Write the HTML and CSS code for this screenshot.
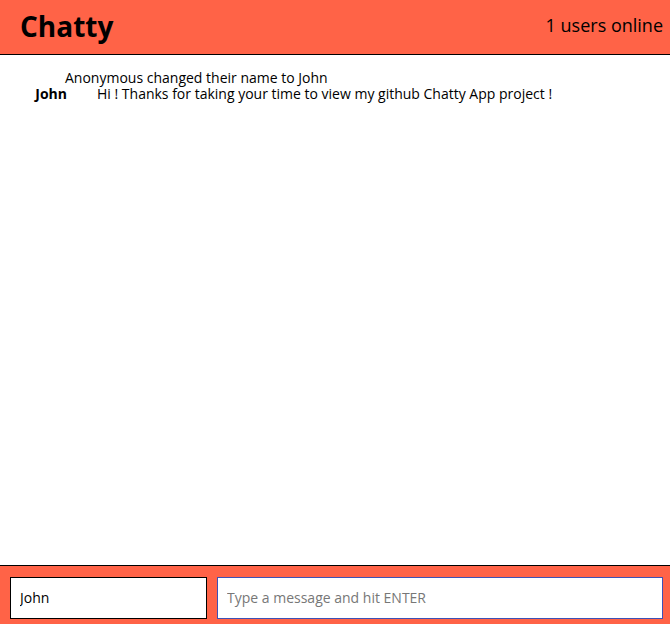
FILE: index.html
```html
<!DOCTYPE html>
<html>
<head>
<meta charset="utf-8">
<link rel="stylesheet" href="styles.css">
</head>
<body>
<div class="app">
  <nav class="navbar">
    <span class="brand">Chatty</span>
    <span class="online">1 users online</span>
  </nav>
  <main class="messages">
    <div class="notification">Anonymous changed their name to John</div>
    <div class="message">
      <span class="username">John</span>
      <span class="content">Hi ! Thanks for taking your time to view my github Chatty App project !</span>
    </div>
  </main>
  <footer class="chatbar">
    <input class="chatbar-username" type="text" value="John">
    <input class="chatbar-message" type="text" placeholder="Type a message and hit ENTER">
  </footer>
</div>
</body>
</html>
```
FILE: styles.css
```css
* { box-sizing: border-box; }
html, body { margin: 0; padding: 0; height: 100%; }
body {
  font-family: "Open Sans", "Liberation Sans", sans-serif;
  color: #000;
  background: #fff;
}
.app {
  display: flex;
  flex-direction: column;
  height: 624px;
}
.navbar {
  height: 55px;
  flex: 0 0 55px;
  background: #ff6347;
  border-bottom: 1px solid #000;
  display: flex;
  align-items: center;
  justify-content: space-between;
  padding: 0 7px 0 20px;
}
.brand {
  font-size: 28px;
  font-weight: 700;
  line-height: 1;
  margin-top: -3px;
}
.online {
  font-size: 18px;
  line-height: 1;
  margin-top: -5px;
}
.messages {
  flex: 1;
  padding-top: 15px;
  font-size: 14px;
  line-height: 16px;
}
.notification {
  padding-left: 65px;
}
.message {
  display: flex;
}
.username {
  width: 67px;
  text-align: right;
  font-weight: 700;
  flex: 0 0 67px;
}
.content {
  padding-left: 30px;
}
.chatbar {
  flex: 0 0 59px;
  background: #ff6347;
  border-top: 1px solid #000;
  display: flex;
  gap: 10px;
  padding: 11px 7px 5px 10px;
}
.chatbar input {
  height: 42px;
  font-family: "Open Sans", "Liberation Sans", sans-serif;
  font-size: 14px;
  padding: 0 9px 2px;
  background: #fff;
  color: #000;
  outline: none;
}
.chatbar-username {
  width: 197px;
  flex: 0 0 197px;
  border: 1px solid #000;
}
.chatbar-message {
  flex: 1;
  min-width: 0;
  border: 1px solid #3f51b5;
}
.chatbar-message::placeholder {
  color: #777;
}
```
